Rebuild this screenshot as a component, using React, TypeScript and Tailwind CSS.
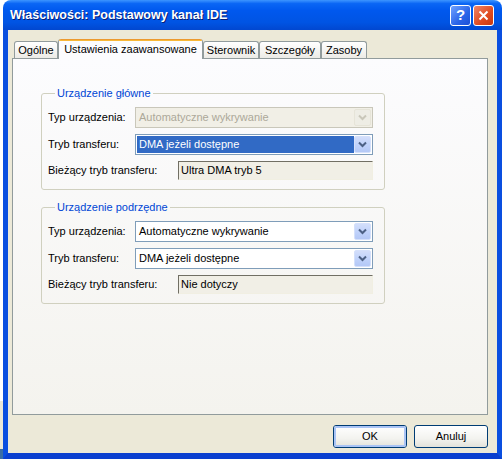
import React from "react";

// XP Luna style property sheet: "Właściwości: Podstawowy kanał IDE"
const FONT = { fontFamily: '"Liberation Sans", Arial, sans-serif' };

function Chevron({ color }: { color: string }) {
  return (
    <svg width="9" height="7" viewBox="0 0 9 7">
      <path d="M1 1.5 L4.5 5 L8 1.5" fill="none" stroke={color} strokeWidth="2" />
    </svg>
  );
}

function Combo({ value, selected, disabled }: { value: string; selected?: boolean; disabled?: boolean }) {
  return (
    <div
      className={
        disabled
          ? "flex h-[21px] w-[238px] border border-[#c9c7ba] bg-[#f1efe6] p-px"
          : "flex h-[21px] w-[238px] border border-[#7f9db9] bg-white p-px"
      }
    >
      <div
        className={
          selected
            ? "flex flex-1 items-center bg-[#316ac5] px-[2px] text-white"
            : disabled
              ? "flex flex-1 items-center px-[2px] text-[#aca899]"
              : "flex flex-1 items-center px-[2px] text-black"
        }
      >
        {value}
      </div>
      <div
        className={
          disabled
            ? "flex w-[17px] items-center justify-center rounded-[2px] border border-[#e6e4d8] bg-[#eeede5]"
            : "flex w-[17px] items-center justify-center rounded-[2px] border border-[#d4e0fb] bg-[linear-gradient(180deg,#d3defa_0%,#c1d3fb_50%,#b4c8f6_100%)]"
        }
      >
        <Chevron color={disabled ? "#c9c7ba" : "#4d6185"} />
      </div>
    </div>
  );
}

function ReadOnly({ value }: { value: string }) {
  return (
    <div className="flex h-[19px] w-[195px] items-center border border-t-[#716f64] border-l-[#716f64] border-r-[#f1efe2] border-b-[#f1efe2] bg-[#f1efe6] px-[2px] text-black">
      {value}
    </div>
  );
}

function Group({ title, rows, mt }: { title: string; rows: { label: string; control: React.ReactNode }[]; mt: string }) {
  return (
    <fieldset className={`ml-[28px] w-[344px] rounded-[3px] border border-[#d0d0bf] pb-[9px] pl-[6px] pr-[11px] ${mt}`}>
      <legend className="ml-[7px] px-[2px] leading-[13px] text-[#0046d5]">{title}</legend>
      <div className="flex flex-col gap-[6px] pt-[7px]">
        {rows.map((r) => (
          <div key={r.label} className="flex items-center justify-between">
            <span>{r.label}</span>
            {r.control}
          </div>
        ))}
      </div>
    </fieldset>
  );
}

function Tab({ label, w, active }: { label: string; w: string; active?: boolean }) {
  if (active) {
    return (
      <div
        className={`relative z-10 -mb-px flex h-[20px] flex-col rounded-t-[3px] border-x border-[#919b9c] bg-[#fcfcfe] ${w}`}
      >
        <div className="h-[3px] rounded-t-[3px] bg-[linear-gradient(180deg,#e68b2c,#ffc73c)]" />
        <div className="flex flex-1 items-center justify-center pb-[2px]">{label}</div>
      </div>
    );
  }
  return (
    <div
      className={`flex h-[17px] items-center justify-center rounded-t-[3px] border-x border-t border-[#919b9c] bg-[linear-gradient(180deg,#ffffff,#ecebe6)] ${w}`}
    >
      {label}
    </div>
  );
}

function Button({ label, def }: { label: string; def?: boolean }) {
  return (
    <div className="flex h-[23px] w-[74px] rounded-[3px] border border-[#003c74] bg-[linear-gradient(180deg,#ffffff_0%,#f3f3ef_60%,#e3e2da_100%)]">
      <div
        className={
          def
            ? "flex flex-1 items-center justify-center rounded-[2px] border-2 border-[#aac4f5]"
            : "flex flex-1 items-center justify-center"
        }
      >
        {label}
      </div>
    </div>
  );
}

export default function App() {
  return (
    <div className="flex h-[459px] w-[502px] overflow-hidden bg-white text-[11px]" style={FONT}>
      <div className="flex w-[3px] flex-col">
        <div className="flex-1 bg-white" />
        <div className="h-[48px] bg-[#ece9d8]" />
        <div className="h-[10px] bg-[#3a6ea5]" />
      </div>
      <div className="flex w-[499px] flex-col">
        <div className="flex h-[30px] items-center justify-between rounded-t-[8px] bg-[linear-gradient(180deg,#3d95ff_0%,#0a66f5_12%,#0058ee_35%,#0054e3_75%,#0147d0_100%)] pl-[7px] pr-[8px]">
          <span className="text-[12.5px] font-bold text-white [text-shadow:1px_1px_0_#0a1e73]">
            Właściwości: Podstawowy kanał IDE
          </span>
          <div className="flex gap-[2px]">
            <div className="flex h-[21px] w-[21px] items-center justify-center rounded-[3px] border border-white bg-[linear-gradient(135deg,#6fa2ff,#2a64e8_60%,#1b50d6)] text-[15px] font-bold text-white">
              ?
            </div>
            <div className="flex h-[21px] w-[21px] items-center justify-center rounded-[3px] border border-white bg-[linear-gradient(135deg,#f0866a,#e04a1e_60%,#c8380e)]">
              <svg width="11" height="11" viewBox="0 0 11 11">
                <path d="M1.5 1.5 L9.5 9.5 M9.5 1.5 L1.5 9.5" stroke="white" strokeWidth="2" />
              </svg>
            </div>
          </div>
        </div>
        <div className="flex flex-1 flex-col border-x-[5px] border-b-[6px] border-x-[#0a4fe0] border-b-[#0a3fcf] bg-[#ece9d8] pl-[4px] pr-[9px] pt-[8px]">
          <div className="ml-[2px] flex h-[20px] items-end">
            <Tab label="Ogólne" w="w-[44px]" />
            <Tab label="Ustawienia zaawansowane" w="w-[145px]" active />
            <Tab label="Sterownik" w="w-[56px]" />
            <Tab label="Szczegóły" w="w-[62px]" />
            <Tab label="Zasoby" w="w-[46px]" />
          </div>
          <div className="flex h-[357px] flex-col border border-[#919b9c] bg-[linear-gradient(180deg,#fcfcfe,#f4f3ee)] pt-[28px]">
            <Group
              title="Urządzenie główne"
              mt=""
              rows={[
                { label: "Typ urządzenia:", control: <Combo value="Automatyczne wykrywanie" disabled /> },
                { label: "Tryb transferu:", control: <Combo value="DMA jeżeli dostępne" selected /> },
                { label: "Bieżący tryb transferu:", control: <ReadOnly value="Ultra DMA tryb 5" /> },
              ]}
            />
            <Group
              title="Urządzenie podrzędne"
              mt="mt-[11px]"
              rows={[
                { label: "Typ urządzenia:", control: <Combo value="Automatyczne wykrywanie" /> },
                { label: "Tryb transferu:", control: <Combo value="DMA jeżeli dostępne" /> },
                { label: "Bieżący tryb transferu:", control: <ReadOnly value="Nie dotyczy" /> },
              ]}
            />
          </div>
          <div className="mt-[10px] flex justify-end gap-[7px] pr-[0px]">
            <Button label="OK" def />
            <Button label="Anuluj" />
          </div>
        </div>
      </div>
    </div>
  );
}
